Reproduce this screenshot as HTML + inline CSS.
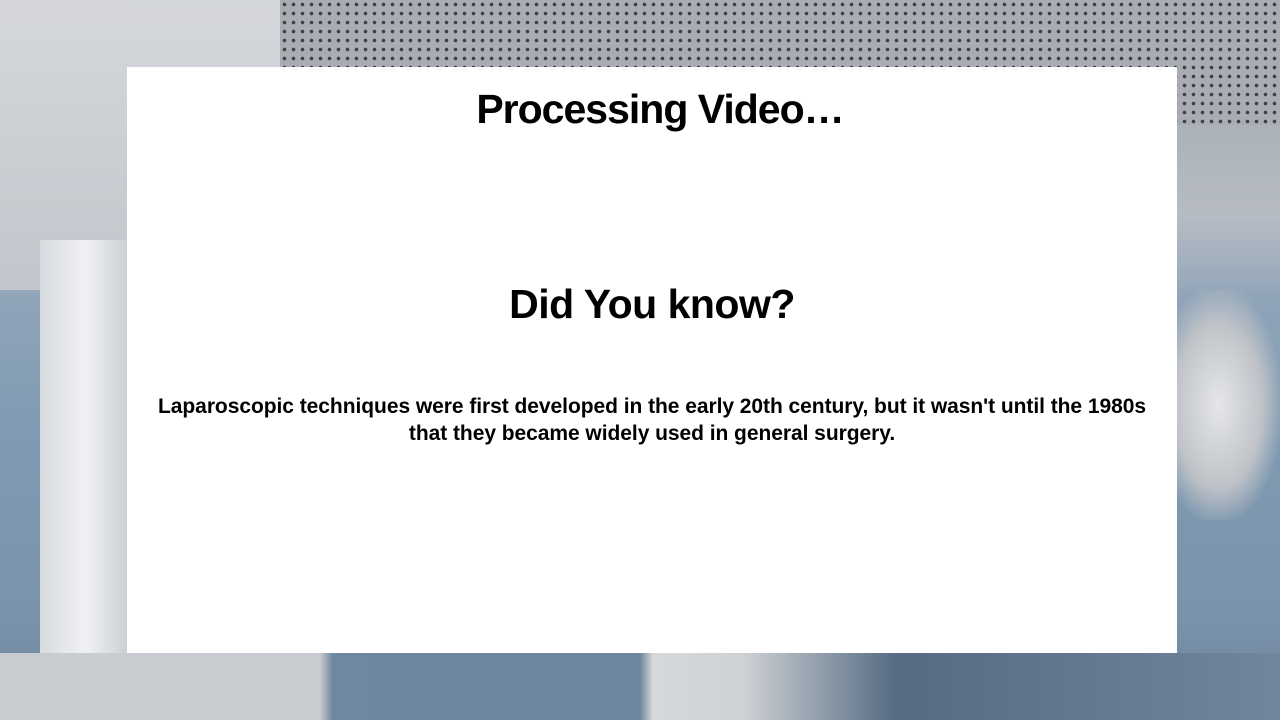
<!DOCTYPE html>
<html><head><meta charset="utf-8"><style>
body{margin:0;width:1280px;height:720px;overflow:hidden;position:relative;font-family:"Liberation Sans",sans-serif;
background:linear-gradient(180deg,#9ea3ab 0%,#aab0b8 15%,#b7bcc4 30%,#8fa4b8 42%,#7f9ab2 60%,#7a93ab 85%,#6f849a 100%);}
.ceil{position:absolute;left:280px;top:0;width:1000px;height:125px;background-color:#a9acb3;
background-image:radial-gradient(circle,#3d4046 1.6px,transparent 2px);background-size:9px 9px;}
.wallL{position:absolute;left:0;top:0;width:300px;height:290px;background:linear-gradient(180deg,#d5d7db,#c2c6cc);}
.eqL{position:absolute;left:40px;top:240px;width:90px;height:480px;background:linear-gradient(90deg,#d8dbdf,#f0f1f3,#c9cdd2);}
.eqR{position:absolute;left:1177px;top:290px;width:103px;height:230px;background:radial-gradient(ellipse at 40% 50%,#e5e6e8 0,#bfc3c8 50%,transparent 75%);}
.floor{position:absolute;left:0;top:653px;width:1280px;height:67px;background:linear-gradient(90deg,#c8cbcf 0,#c8cbcf 25%,#6f87a0 26%,#6d859d 50%,#d6d8da 51%,#cfd2d5 58%,#556b82 70%,#6f869c 100%);}
.box{position:absolute;left:127px;top:67px;width:1050px;height:586px;background:#fff;text-align:center;color:#000;}
h1{margin:0;position:absolute;top:19px;left:8px;width:100%;font-size:41px;font-weight:bold;letter-spacing:-1px;}
h2{margin:0;position:absolute;top:214px;left:0;width:100%;font-size:41px;font-weight:bold;letter-spacing:-0.5px;}
p{margin:0;position:absolute;top:326px;left:-20px;width:1090px;font-size:21px;line-height:27px;font-weight:bold;letter-spacing:-0.05px;}
</style></head><body>
<div class="wallL"></div><div class="ceil"></div><div class="eqL"></div><div class="eqR"></div><div class="floor"></div>
<div class="box">
<h1>Processing Video…</h1>
<h2>Did You know?</h2>
<p>Laparoscopic techniques were first developed in the early 20th century, but it wasn't until the 1980s<br>that they became widely used in general surgery.</p>
</div>
</body></html>
